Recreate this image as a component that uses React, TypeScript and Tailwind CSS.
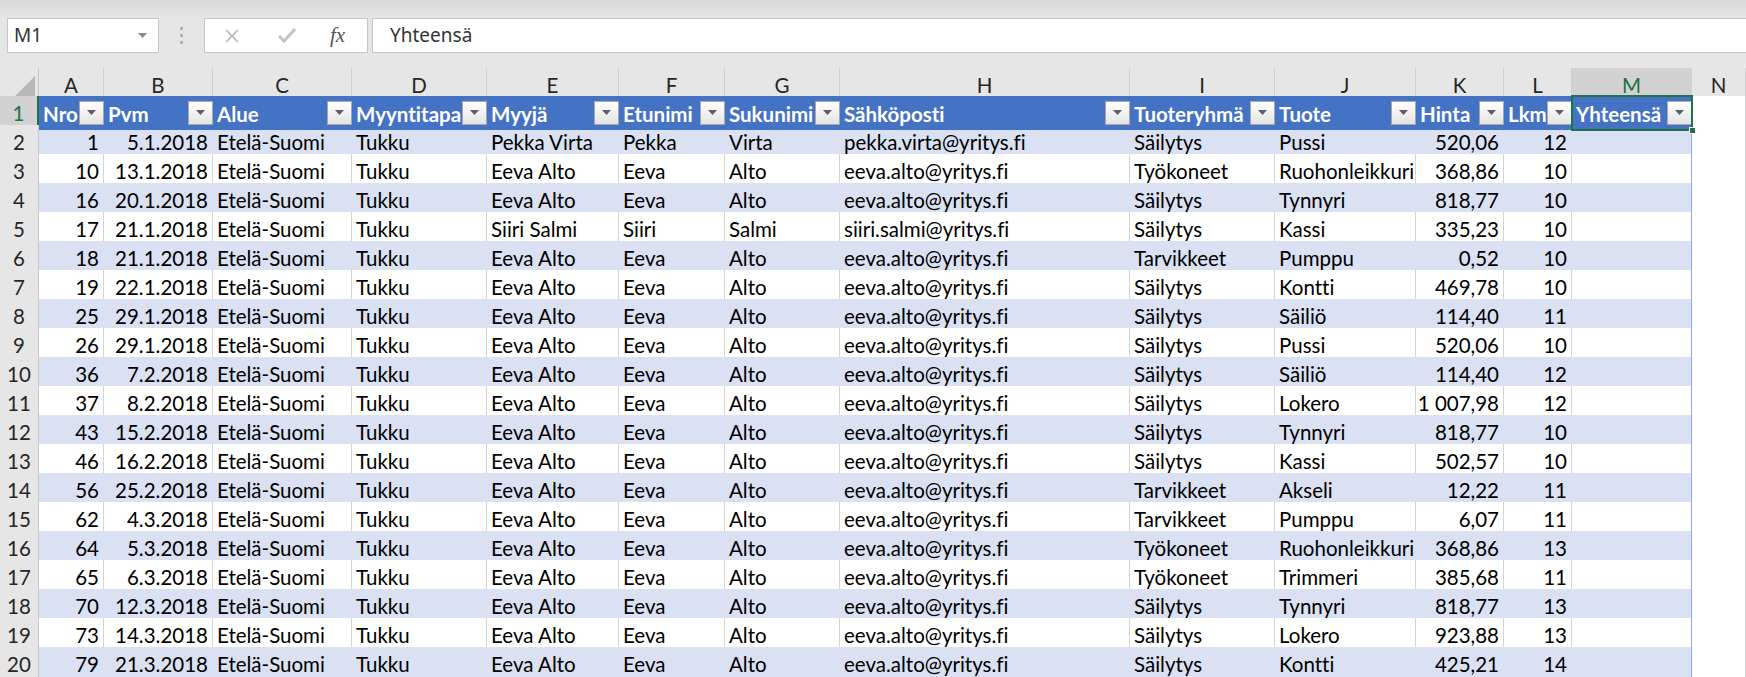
import type { ReactNode } from 'react';

// Sheet column template: row header, A..M (table), N (outside table)
const COLS =
  'grid grid-cols-[39px_65px_109px_139px_135px_132px_106px_115px_290px_145px_141px_88px_68px_120px_1fr]';

const LETTERS = ['A', 'B', 'C', 'D', 'E', 'F', 'G', 'H', 'I', 'J', 'K', 'L', 'M', 'N'];

const HEADERS = [
  'Nro',
  'Pvm',
  'Alue',
  'Myyntitapa',
  'Myyjä',
  'Etunimi',
  'Sukunimi',
  'Sähköposti',
  'Tuoteryhmä',
  'Tuote',
  'Hinta',
  'Lkm',
  'Yhteensä',
];

// columns aligned right (numbers / dates)
const RIGHT = [0, 1, 10, 11];

const EEVA = ['Eeva Alto', 'Eeva', 'Alto', 'eeva.alto@yritys.fi'];

const row = (nro: string, pvm: string, seller: string[], group: string, item: string, price: string, qty: string) => [
  nro,
  pvm,
  'Etelä-Suomi',
  'Tukku',
  ...seller,
  group,
  item,
  price,
  qty,
];

const ROWS: string[][] = [
  row('1', '5.1.2018', ['Pekka Virta', 'Pekka', 'Virta', 'pekka.virta@yritys.fi'], 'Säilytys', 'Pussi', '520,06', '12'),
  row('10', '13.1.2018', EEVA, 'Työkoneet', 'Ruohonleikkuri', '368,86', '10'),
  row('16', '20.1.2018', EEVA, 'Säilytys', 'Tynnyri', '818,77', '10'),
  row('17', '21.1.2018', ['Siiri Salmi', 'Siiri', 'Salmi', 'siiri.salmi@yritys.fi'], 'Säilytys', 'Kassi', '335,23', '10'),
  row('18', '21.1.2018', EEVA, 'Tarvikkeet', 'Pumppu', '0,52', '10'),
  row('19', '22.1.2018', EEVA, 'Säilytys', 'Kontti', '469,78', '10'),
  row('25', '29.1.2018', EEVA, 'Säilytys', 'Säiliö', '114,40', '11'),
  row('26', '29.1.2018', EEVA, 'Säilytys', 'Pussi', '520,06', '10'),
  row('36', '7.2.2018', EEVA, 'Säilytys', 'Säiliö', '114,40', '12'),
  row('37', '8.2.2018', EEVA, 'Säilytys', 'Lokero', '1 007,98', '12'),
  row('43', '15.2.2018', EEVA, 'Säilytys', 'Tynnyri', '818,77', '10'),
  row('46', '16.2.2018', EEVA, 'Säilytys', 'Kassi', '502,57', '10'),
  row('56', '25.2.2018', EEVA, 'Tarvikkeet', 'Akseli', '12,22', '11'),
  row('62', '4.3.2018', EEVA, 'Tarvikkeet', 'Pumppu', '6,07', '11'),
  row('64', '5.3.2018', EEVA, 'Työkoneet', 'Ruohonleikkuri', '368,86', '13'),
  row('65', '6.3.2018', EEVA, 'Työkoneet', 'Trimmeri', '385,68', '11'),
  row('70', '12.3.2018', EEVA, 'Säilytys', 'Tynnyri', '818,77', '13'),
  row('73', '14.3.2018', EEVA, 'Säilytys', 'Lokero', '923,88', '13'),
  row('79', '21.3.2018', EEVA, 'Säilytys', 'Kontti', '425,21', '14'),
];

export default function App() {
  return (
    <div className="h-[677px] w-[1746px] overflow-hidden bg-white font-['Lato',sans-serif] text-[20.5px] text-black [font-variant-ligatures:none]">
      <FormulaBar />
      <ColumnHeaders />
      <HeaderRow />
      {ROWS.map((cells, i) => (
        <DataRow key={i} n={i + 2} cells={cells} />
      ))}
    </div>
  );
}

function FormulaBar() {
  return (
    <div className="h-[68px] bg-[#e6e6e6]">
      <div className="h-[18px] bg-gradient-to-b from-[#d8d8d8] to-[#e6e6e6]" />
      <div className="flex h-[35px] font-['Noto_Sans',sans-serif] text-[19px] text-[#333]">
        {/* Name box */}
        <div className="ml-[7px] flex w-[152px] items-center justify-between border border-[#c6c6c6] bg-white pl-[6px] pr-[11px]">
          <span>M1</span>
          <svg width="9" height="5" viewBox="0 0 9 5" aria-hidden="true">
            <path d="M0 0h9L4.5 5z" fill="#8a8a8a" />
          </svg>
        </div>
        {/* Grip dots */}
        <div className="flex w-[45px] flex-col items-center justify-center gap-[4px]">
          <span className="h-[3px] w-[3px] bg-[#b0b0b0]" />
          <span className="h-[3px] w-[3px] bg-[#b0b0b0]" />
          <span className="h-[3px] w-[3px] bg-[#b0b0b0]" />
        </div>
        {/* Cancel / enter / fx */}
        <div className="flex w-[164px] items-center border border-[#c6c6c6] bg-white">
          <svg className="ml-[19px]" width="16" height="16" viewBox="0 0 16 16" aria-hidden="true">
            <path d="M2 2l12 12M14 2L2 14" stroke="#b5b5b5" strokeWidth="1.6" fill="none" />
          </svg>
          <svg className="ml-[37px]" width="20" height="17" viewBox="0 0 20 17" aria-hidden="true">
            <path d="M2 9l5 5L18 2" stroke="#c4c4c4" strokeWidth="3" fill="none" />
          </svg>
          <span className="ml-[33px] font-['Liberation_Serif',serif] text-[21px] italic text-[#555]">fx</span>
        </div>
        {/* Formula input */}
        <div className="ml-[4px] flex flex-1 items-center border-y border-l border-[#c6c6c6] bg-white pl-[17px]">
          Yhteensä
        </div>
      </div>
    </div>
  );
}

function ColumnHeaders() {
  return (
    <div className={`${COLS} h-[28px] bg-[#e6e6e6] text-[#262626]`}>
      <div className="flex items-end justify-end border-r border-[#c8c8c8] pb-[3px] pr-[3px]">
        <svg width="22" height="22" viewBox="0 0 22 22" aria-hidden="true">
          <path d="M22 0v22H0z" fill="#b8b8b8" />
        </svg>
      </div>
      {LETTERS.map((l) => (
        <div
          key={l}
          className={`flex items-center justify-center border-r border-[#d0d0d0] pt-[2px] ${
            l === 'M' ? 'bg-[#d2d2d2] text-[#217346]' : ''
          }`}
        >
          {l}
        </div>
      ))}
    </div>
  );
}

function FilterButton() {
  return (
    <div className="flex h-[24px] w-[25px] shrink-0 items-center justify-center border border-[#a8a8a8] bg-gradient-to-b from-white to-[#e4e4e4]">
      <svg width="9" height="5" viewBox="0 0 9 5" aria-hidden="true">
        <path d="M0 0h9L4.5 5z" fill="#5f5f5f" />
      </svg>
    </div>
  );
}

function RowHead({ n, active = false }: { n: number; active?: boolean }) {
  return (
    <div
      className={`flex items-center justify-center border-b border-[#d4d4d4] pt-[2px] ${
        active
          ? 'border-r-2 border-r-[#217346] bg-[#d2d2d2] text-[#217346]'
          : 'border-r border-r-[#c8c8c8] bg-[#e6e6e6] text-[#262626]'
      }`}
    >
      {n}
    </div>
  );
}

function HeaderRow() {
  return (
    <div className={`${COLS} h-[29px]`}>
      <RowHead n={1} active />
      {HEADERS.map((h, i) => (
        <div key={h} className="relative flex items-center bg-[#4472c4] pl-[4px] font-bold text-white">
          <span className="min-w-0 flex-1 overflow-hidden whitespace-nowrap pt-[2px]">{h}</span>
          {i === 12 ? <Selection /> : null}
          <FilterButton />
        </div>
      ))}
      <div className="border-b border-r border-[#d4d4d4] bg-white" />
    </div>
  );
}

// green active-cell frame with the fill handle
function Selection() {
  return (
    <div className="pointer-events-none absolute -bottom-[1px] -left-[1px] -right-[1px] -top-[1px] border-2 border-[#217346]">
      <div className="absolute -bottom-[5px] -right-[5px] h-[7px] w-[7px] border border-white bg-[#217346]" />
    </div>
  );
}

function Cell({ children, right, banded, last }: { children: ReactNode; right: boolean; banded: boolean; last: boolean }) {
  return (
    <div
      className={`flex items-center overflow-hidden whitespace-nowrap border-b border-r border-b-[#a4b9e1] px-[4px] pt-[2px] ${
        right ? 'justify-end' : ''
      } ${banded ? 'bg-[#d9e1f2]' : 'bg-white'} ${
        last ? 'border-r-[#8eaadb]' : banded ? 'border-r-[#d9e1f2]' : 'border-r-[#d4d4d4]'
      }`}
    >
      {children}
    </div>
  );
}

function DataRow({ n, cells }: { n: number; cells: string[] }) {
  const banded = n % 2 === 0;
  return (
    <div className={`${COLS} h-[29px]`}>
      <RowHead n={n} />
      {cells.map((c, i) => (
        <Cell key={i} right={RIGHT.includes(i)} banded={banded} last={false}>
          {c}
        </Cell>
      ))}
      {/* Yhteensä column is still empty */}
      <Cell right={false} banded={banded} last>
        {''}
      </Cell>
      <div className="border-b border-r border-[#d4d4d4] bg-white" />
    </div>
  );
}
